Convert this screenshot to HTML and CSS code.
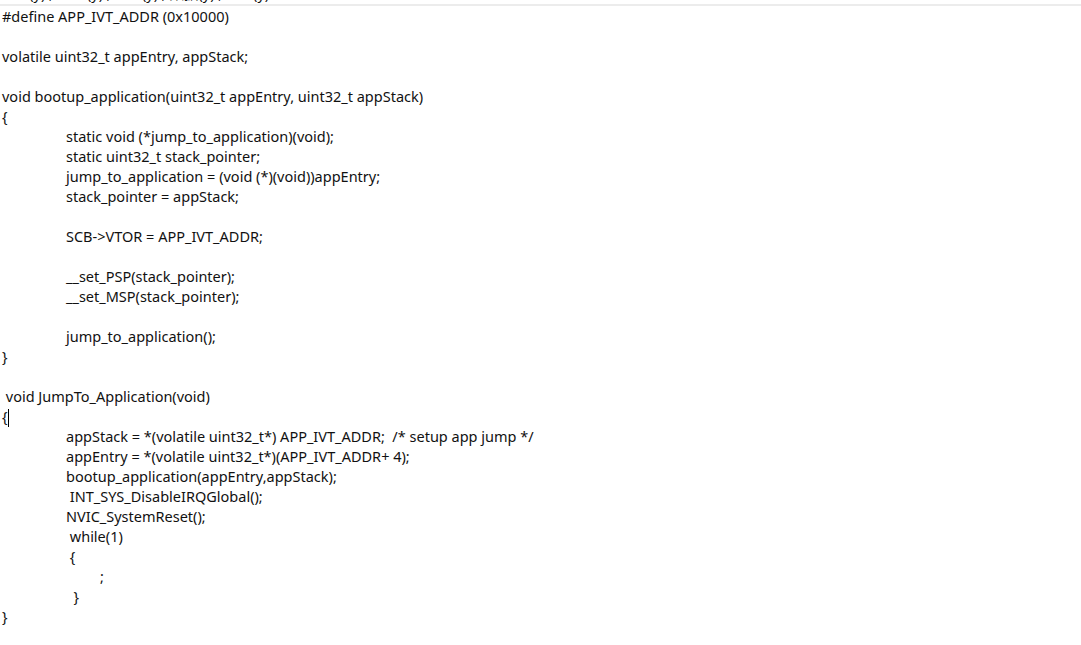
FILE: index.html
```html
<!DOCTYPE html>
<html lang="en">
<head>
  <meta charset="UTF-8">
  <title>bootloader jump</title>
  <link rel="stylesheet" href="styles.css">
</head>
<body>
  <div class="prev-line"><div class="prev-text">ucrt(y) ; mlcr(y) ; mcc(y) ; 数据(y) ; ucrt(y)</div></div>
  <div class="rule"></div>
  <div class="code">
<div class="ln">#define APP_IVT_ADDR (0x10000)</div>
<div class="ln"> </div>
<div class="ln">volatile uint32_t appEntry, appStack;</div>
<div class="ln"> </div>
<div class="ln">void bootup_application(uint32_t appEntry, uint32_t appStack)</div>
<div class="ln">{</div>
<div class="ln">	static void (*jump_to_application)(void);</div>
<div class="ln">	static uint32_t stack_pointer;</div>
<div class="ln">	jump_to_application = (void (*)(void))appEntry;</div>
<div class="ln">	stack_pointer = appStack;</div>
<div class="ln"> </div>
<div class="ln">	SCB-&gt;VTOR = APP_IVT_ADDR;</div>
<div class="ln"> </div>
<div class="ln">	__set_PSP(stack_pointer);</div>
<div class="ln">	__set_MSP(stack_pointer);</div>
<div class="ln"> </div>
<div class="ln">	jump_to_application();</div>
<div class="ln">}</div>
<div class="ln"> </div>
<div class="ln"> void JumpTo_Application(void)</div>
<div class="ln">{<span class="caret"></span></div>
<div class="ln">	appStack = *(volatile uint32_t*) APP_IVT_ADDR;  /* setup app jump */</div>
<div class="ln">	appEntry = *(volatile uint32_t*)(APP_IVT_ADDR+ 4);</div>
<div class="ln">	bootup_application(appEntry,appStack);</div>
<div class="ln">	 INT_SYS_DisableIRQGlobal();</div>
<div class="ln">	NVIC_SystemReset();</div>
<div class="ln">	 while(1)</div>
<div class="ln">	 {</div>
<div class="ln">	         ;</div>
<div class="ln">	  }</div>
<div class="ln">}</div>
  </div>
</body>
</html>
```

FILE: styles.css
```css
body {
  margin: 0;
  background: #ffffff;
  color: #111111;
  font-family: "Noto Sans", "Noto Sans CJK SC", sans-serif;
  font-size: 14.5px;
  overflow: hidden;
}
.prev-line {
  height: 4px;
  overflow: hidden;
}
.prev-text {
  margin-top: -17px;
  padding-left: 2px;
  line-height: 20px;
  white-space: pre;
}
.rule {
  height: 2px;
  background: #ececec;
}
.code {
  padding-left: 2px;
}
.ln {
  height: 20px;
  line-height: 20px;
  white-space: pre;
  tab-size: 64px;
}
.caret {
  display: inline-block;
  width: 1px;
  height: 18px;
  background: #000;
  vertical-align: middle;
}
```
